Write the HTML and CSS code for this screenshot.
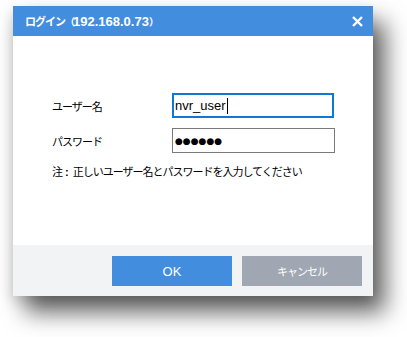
FILE: index.html
```html
<!DOCTYPE html>
<html lang="ja">
<head>
  <meta charset="UTF-8">
  <meta name="viewport" content="width=device-width, initial-scale=1.0">
  <title>ログイン</title>
  <link rel="stylesheet" href="styles.css">
</head>
<body>
  <div class="dialog">
    <header class="dialog-head">
      <div class="title"><span class="kana">ログイン</span><span class="paren">（</span>192.168.0.73<span class="paren">）</span></div>
      <button class="close" aria-label="閉じる">
        <svg width="11" height="11" viewBox="0 0 11 11">
          <path d="M1 1 L10 10 M10 1 L1 10" stroke="#fff" stroke-width="2.4" />
        </svg>
      </button>
    </header>

    <main class="dialog-body">
      <div class="row">
        <label class="label" for="user">ユーザー名</label>
        <div class="field focused" id="user"><span>nvr_user</span><span class="caret"></span></div>
      </div>
      <div class="row">
        <label class="label" for="pass">パスワード</label>
        <div class="field" id="pass"><span class="dots">●●●●●●</span></div>
      </div>
      <p class="note">注<span class="colon">:</span>正しいユーザー名とパスワードを入力してください</p>
    </main>

    <footer class="dialog-foot">
      <button class="btn ok">OK</button>
      <button class="btn cancel"><span class="kana">キャンセル</span></button>
    </footer>
  </div>
</body>
</html>
```

FILE: styles.css
```css
:root {
  --blue: #438ddf;
  --grey-btn: #a0a7b2;
  --foot-bg: #f2f3f5;
  --focus: #0f78d7;
}

html {
  min-height: 100%;
}

body {
  margin: 0;
  padding: 0;
  min-height: 337px;
  background: #fff;
  font-family: "Noto Sans CJK JP", "DejaVu Sans", sans-serif;
  font-size: 11px;
  letter-spacing: -1px;
  color: #000;
}

.dialog {
  width: 360px;
  height: 290px;
  margin: 6px 0 0 13px;
  display: flex;
  flex-direction: column;
  background: #fff;
  box-shadow: 12px 16px 22px rgba(0, 0, 0, 0.62), -3px 5px 12px rgba(0, 0, 0, 0.12);
}

.dialog-head {
  height: 30px;
  background: var(--blue);
  display: flex;
  align-items: center;
  justify-content: space-between;
  padding: 0 10px 0 12px;
}

.title {
  color: #fff;
  font-family: "Liberation Sans", "Noto Sans CJK JP", sans-serif;
  font-weight: bold;
  font-size: 13px;
  letter-spacing: 0;
}

.title .kana {
  font-family: "Noto Sans CJK JP", sans-serif;
  font-size: 11px;
  letter-spacing: -1px;
}

.title .paren {
  font-family: "Noto Sans CJK JP", sans-serif;
  font-size: 10px;
  letter-spacing: -2px;
}

.close {
  border: none;
  background: none;
  padding: 0;
  width: 11px;
  height: 11px;
  display: flex;
}

.dialog-body {
  flex: 1;
  padding: 57px 0 0 39px;
  display: flex;
  flex-direction: column;
  gap: 10px;
}

.row {
  display: flex;
  align-items: center;
  height: 25px;
}

.label {
  width: 120px;
}

.field {
  width: 157px;
  height: 21px;
  border: 1px solid #7a7a7a;
  padding: 1px 2px;
  display: flex;
  align-items: center;
  font-family: "Liberation Sans", sans-serif;
  font-size: 13px;
  letter-spacing: 0;
}

.field.focused {
  border: 2px solid var(--focus);
  width: 155px;
  height: 21px;
  padding: 0 2px 0 1px;
}

.caret {
  width: 1px;
  height: 16px;
  background: #000;
  margin-left: 1px;
}

.dots {
  font-size: 9px;
  font-family: "DejaVu Sans", sans-serif;
}

.note {
  margin: 0;
  line-height: 16px;
}

.colon {
  font-family: "Liberation Sans", sans-serif;
  font-weight: bold;
  letter-spacing: 0;
  margin: 0 4px 0 3px;
}

.dialog-foot {
  height: 51px;
  background: var(--foot-bg);
  display: flex;
  justify-content: flex-end;
  gap: 10px;
  padding: 11px 11px 0 0;
  box-sizing: border-box;
}

.btn {
  width: 120px;
  height: 30px;
  border: none;
  color: #fff;
  font-family: "Liberation Sans", "Noto Sans CJK JP", sans-serif;
  font-size: 13px;
  letter-spacing: 0;
}

.btn .kana {
  font-family: "Noto Sans CJK JP", sans-serif;
  font-size: 11px;
  letter-spacing: -1px;
}

.ok {
  background: var(--blue);
}

.cancel {
  background: var(--grey-btn);
}
```
